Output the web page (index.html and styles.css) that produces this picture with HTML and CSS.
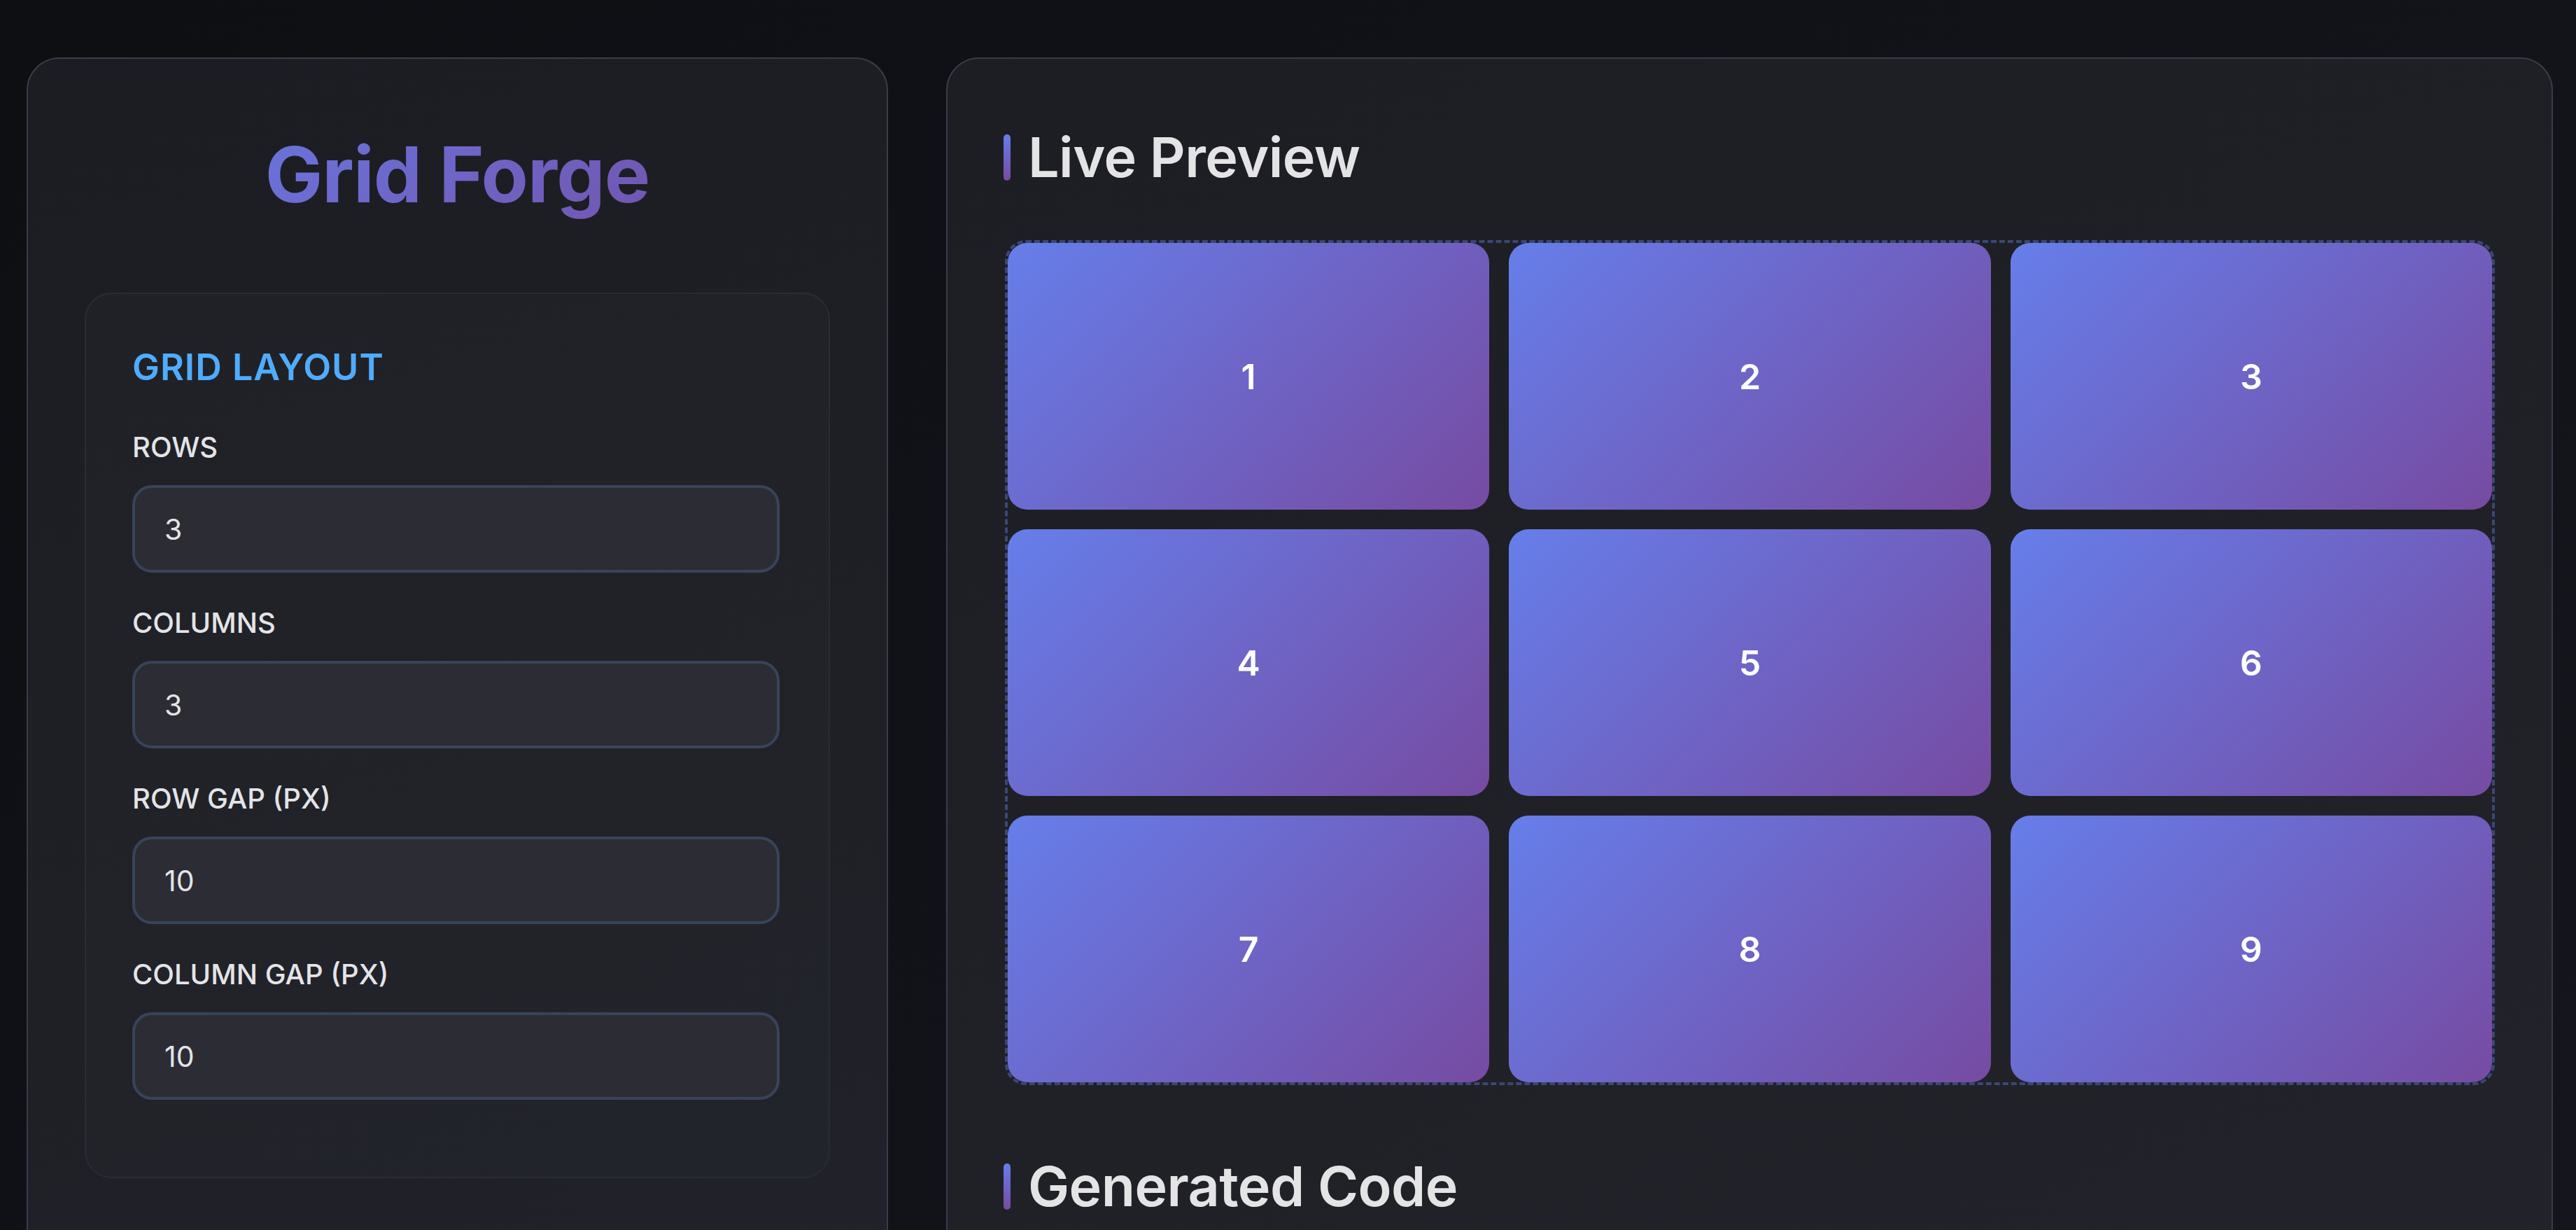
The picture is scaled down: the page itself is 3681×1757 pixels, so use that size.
FILE: index.html
```html
<!DOCTYPE html>
<html lang="en">
<head>
<meta charset="utf-8">
<title>Grid Forge</title>
<link rel="stylesheet" href="styles.css">
</head>
<body>
<div class="app">
  <aside class="panel sidebar">
    <h1 class="brand">Grid Forge</h1>
    <section class="card">
      <h3 class="card-title">Grid Layout</h3>
      <div class="field">
        <label class="field-label">Rows</label>
        <input class="field-input" type="number" value="3">
      </div>
      <div class="field">
        <label class="field-label">Columns</label>
        <input class="field-input" type="number" value="3">
      </div>
      <div class="field">
        <label class="field-label">Row Gap (px)</label>
        <input class="field-input" type="number" value="10">
      </div>
      <div class="field">
        <label class="field-label">Column Gap (px)</label>
        <input class="field-input" type="number" value="10">
      </div>
    </section>
  </aside>
  <main class="panel workspace">
    <section class="block">
      <h2 class="section-title">Live Preview</h2>
      <div class="preview">
        <div class="cell">1</div>
        <div class="cell">2</div>
        <div class="cell">3</div>
        <div class="cell">4</div>
        <div class="cell">5</div>
        <div class="cell">6</div>
        <div class="cell">7</div>
        <div class="cell">8</div>
        <div class="cell">9</div>
      </div>
    </section>
    <section class="block block-code">
      <h2 class="section-title">Generated Code</h2>
      <pre class="code">.grid-container {
  display: grid;
  grid-template-rows: repeat(3, 1fr);
  grid-template-columns: repeat(3, 1fr);
  row-gap: 10px;
  column-gap: 10px;
}</pre>
    </section>
  </main>
</div>
</body>
</html>
```
FILE: styles.css
```css
* { box-sizing: border-box; }

html, body {
  margin: 0;
  padding: 0;
}

body {
  font-family: Inter, "Noto Sans", sans-serif;
  color: #e4e4e7;
  background: linear-gradient(135deg, #0e0f13 0%, #121319 50%, #16161e 100%);
  min-height: 100vh;
}

.app {
  display: grid;
  grid-template-columns: 1231px 1fr;
  gap: 83px;
  padding: 82px 33px 82px 38px;
  align-items: stretch;
}

.panel {
  border: 2px solid #363d4b;
  border-radius: 47px;
  background: linear-gradient(160deg, #1c1d22 0%, #1f2026 50%, #23242d 100%);
}

.sidebar {
  padding: 81px;
}

.brand {
  margin: 18px 0 102px;
  font-size: 110px;
  line-height: 133px;
  font-weight: 700;
  text-align: center;
  letter-spacing: -1px;
  background: linear-gradient(135deg, #667eea 0%, #764ba2 100%);
  -webkit-background-clip: text;
  background-clip: text;
  color: transparent;
}

.card {
  border: 2px solid #2a2c33;
  border-radius: 38px;
  background: linear-gradient(160deg, #202126 0%, #22242b 100%);
  padding: 75px 70px 62px 66px;
}

.card-title {
  margin: 0 0 60px;
  font-size: 52px;
  line-height: 60px;
  font-weight: 600;
  color: #4facfe;
  text-transform: uppercase;
  letter-spacing: 1px;
}

.field {
  margin-bottom: 48px;
}

.field-label {
  display: block;
  margin-bottom: 31px;
  font-size: 40px;
  line-height: 47px;
  font-weight: 500;
  color: #e4e4e7;
  text-transform: uppercase;
}

.field-input {
  display: block;
  width: 100%;
  height: 125px;
  padding: 0 42px;
  border: 4px solid #38445a;
  border-radius: 28px;
  background: #2c2d34;
  color: #e4e4e7;
  font-family: Inter, "Noto Sans", sans-serif;
  font-size: 41px;
  outline: none;
  -moz-appearance: textfield;
}

.field-input::-webkit-inner-spin-button,
.field-input::-webkit-outer-spin-button {
  -webkit-appearance: none;
  margin: 0;
}

.workspace {
  padding: 80px;
  background: linear-gradient(160deg, #1d1e23 0%, #202127 50%, #24242d 100%);
}

.section-title {
  display: flex;
  align-items: center;
  gap: 25px;
  margin: 12px 0 70px;
  font-size: 79px;
  line-height: 97px;
  font-weight: 600;
  letter-spacing: -0.6px;
  color: #e4e4e7;
}

.section-title::before {
  content: "";
  width: 10px;
  height: 66px;
  border-radius: 5px;
  background: linear-gradient(180deg, #667eea 0%, #764ba2 100%);
  flex-shrink: 0;
}

.block-code {
  margin-top: 96px;
}

.preview {
  display: grid;
  grid-template-columns: repeat(3, 1fr);
  grid-template-rows: repeat(3, 381px);
  gap: 28px;
  border: 4px dashed #3a4777;
  border-radius: 30px;
  margin-left: 2px;
  margin-right: 1px;
}

.cell {
  display: flex;
  align-items: center;
  justify-content: center;
  border-radius: 28px;
  background: linear-gradient(135deg, #667eea 0%, #764ba2 100%);
  color: #ffffff;
  font-size: 50px;
  font-weight: 600;
}

.code {
  margin: 0;
  padding: 60px;
  border-radius: 30px;
  background: #15161b;
  border: 2px solid #2a2c33;
  color: #a5d6ff;
  font-family: "DejaVu Sans Mono", "Liberation Mono", monospace;
  font-size: 38px;
  line-height: 1.6;
}
```
